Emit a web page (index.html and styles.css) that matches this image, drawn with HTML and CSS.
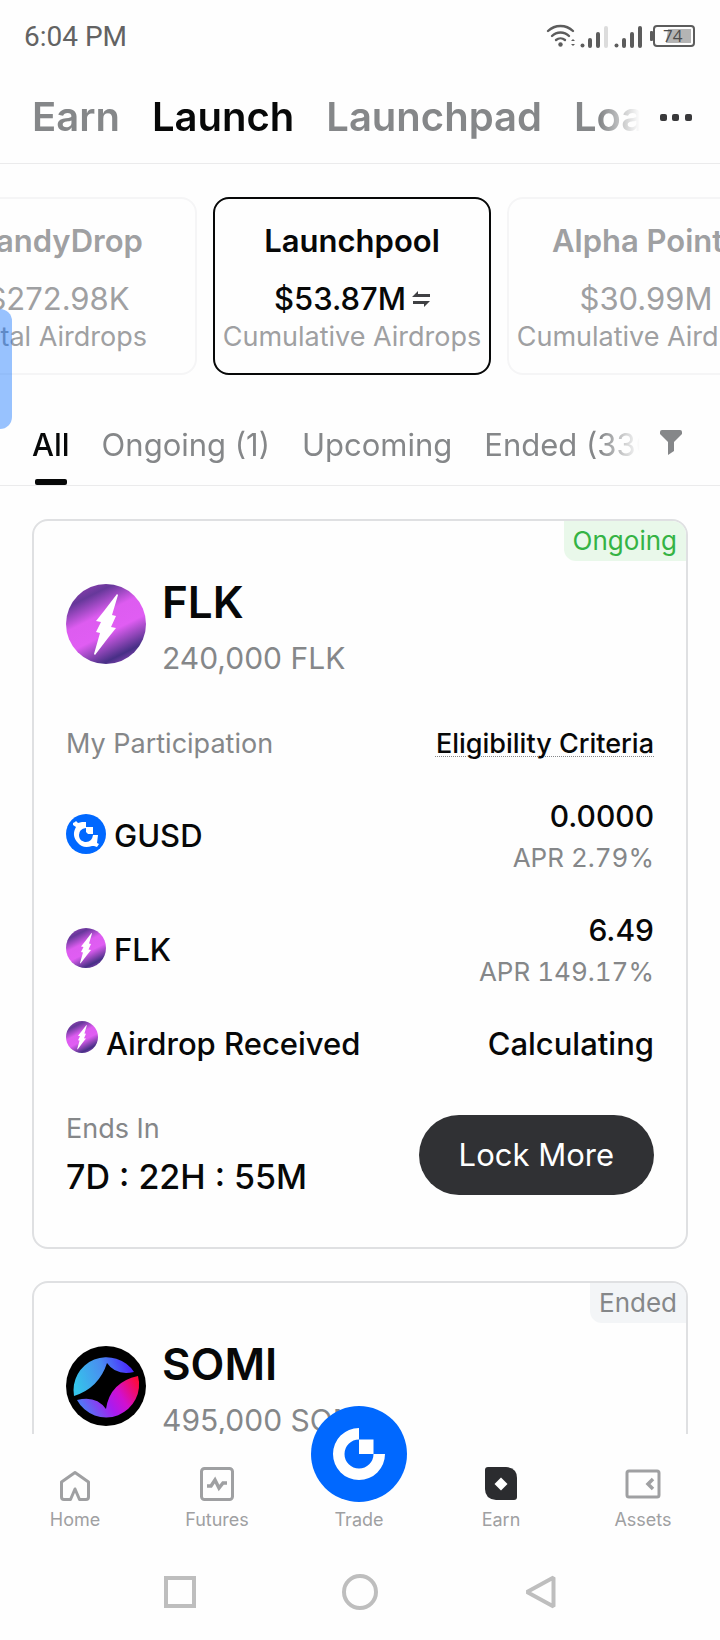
FILE: index.html
```html
<!DOCTYPE html>
<html lang="en">
<head>
  <meta charset="UTF-8">
  <meta name="viewport" content="width=device-width, initial-scale=1.0">
  <title>Launchpool</title>
  <link rel="stylesheet" href="styles.css">
</head>
<body>
  <!-- shared coin icons -->
  <svg class="defs" aria-hidden="true">
    <defs>
      <linearGradient id="flkBg" x1="0.25" y1="0" x2="0.75" y2="1">
        <stop offset="0" stop-color="#8a3fae"/>
        <stop offset="0.14" stop-color="#66389a"/>
        <stop offset="0.38" stop-color="#dd5cf0"/>
        <stop offset="0.6" stop-color="#e05df3"/>
        <stop offset="0.76" stop-color="#8a44b4"/>
        <stop offset="0.88" stop-color="#472f86"/>
        <stop offset="1" stop-color="#8a45b5"/>
      </linearGradient>
      <linearGradient id="somiA" x1="0" y1="0.5" x2="1" y2="0.3">
        <stop offset="0" stop-color="#35c3ea"/>
        <stop offset="0.5" stop-color="#4a8df0"/>
        <stop offset="1" stop-color="#4a1cff"/>
      </linearGradient>
      <linearGradient id="somiB" x1="0" y1="0.6" x2="1" y2="0.2">
        <stop offset="0" stop-color="#4c7df5"/>
        <stop offset="0.42" stop-color="#a81cf0"/>
        <stop offset="0.65" stop-color="#d010d0"/>
        <stop offset="1" stop-color="#ff0a3c"/>
      </linearGradient>
    </defs>
    <symbol id="flk" viewBox="0 0 80 80">
      <circle cx="40" cy="40" r="40" fill="url(#flkBg)"/>
      <path d="M51 10l1 1-6 20 4 1-5 11 5 1-8 10-13 17-1-1 6-21-4-1 5-10-5-1 8-10z" fill="#fff"/>
    </symbol>
  </svg>

  <div class="app">
    <div class="status-bar">
      <span>6:04 PM</span>
      <svg width="150" height="28" viewBox="0 0 150 28" fill="none" stroke="#5c5c5c">
        <g stroke-width="2.4" stroke-linecap="round">
          <path d="M2 8a18 18 0 0 1 25 0M6 13a12 12 0 0 1 17 0M10 17a7 7 0 0 1 9 0"/>
        </g>
        <g fill="#5c5c5c" stroke="none">
          <circle cx="14.500" cy="21.500" r="2.200"/>
          <path d="M25 18l2-2 2 2zM25 21l2 2 2-2z"/>
          <circle cx="36.500" cy="22.500" r="2"/>
          <rect x="42" y="15" width="4" height="10" rx="2"/>
          <rect x="50" y="9" width="4" height="16" rx="2"/>
          <rect x="58" y="3" width="4" height="22" rx="2" fill="#dcdcdc"/>
          <circle cx="70.500" cy="22.500" r="2"/>
          <rect x="76" y="15" width="4" height="10" rx="2"/>
          <rect x="84" y="9" width="4" height="16" rx="2"/>
          <rect x="92" y="3" width="4" height="22" rx="2"/>
          <rect x="104" y="8" width="3" height="10" rx="1"/>
          <path d="M122 6h23v14h-25z" fill="#b4b4b4"/>
        </g>
        <rect x="108" y="3" width="40" height="20" rx="3" stroke-width="2"/>
        <text class="battery" x="117" y="19">74</text>
      </svg>
    </div>

    <header class="top-tabs">
      <nav class="tab-list">
        <a href="#">Earn</a>
        <a href="#" class="active">Launch</a>
        <a href="#">Launchpad</a>
        <a href="#">Loan</a>
      </nav>
      <button class="icon-btn" aria-label="More">
        <svg width="32" height="8" viewBox="0 0 32 8" fill="#39393b">
          <rect x="0" y="0" width="7" height="7" rx="2"/>
          <rect x="12" y="0" width="7" height="7" rx="2"/>
          <rect x="25" y="0" width="7" height="7" rx="2"/>
        </svg>
      </button>
    </header>

    <main>
      <section class="pools">
        <div class="pool">
          <h3>CandyDrop</h3>
          <p class="amount">$272.98K</p>
          <p class="caption">Total Airdrops</p>
        </div>
        <div class="pool active">
          <h3>Launchpool</h3>
          <p class="amount">$53.87M
            <svg width="18" height="16" viewBox="0 0 18 16" fill="#3f4043"><path d="M0 6L6 0v3h12v3zM18 10l-6 6v-3H1v-3z"/></svg>
          </p>
          <p class="caption">Cumulative Airdrops</p>
        </div>
        <div class="pool">
          <h3>Alpha Points</h3>
          <p class="amount">$30.99M</p>
          <p class="caption">Cumulative Airdrops</p>
        </div>
      </section>

      <div class="filter-tabs">
        <nav class="tab-list">
          <a href="#" class="active">All</a>
          <a href="#">Ongoing (1)</a>
          <a href="#">Upcoming</a>
          <a href="#">Ended (330)</a>
        </nav>
        <button class="icon-btn" aria-label="Filter">
          <svg width="22" height="25" viewBox="0 0 22 25" fill="#858789"><path d="M2 0h18q2 0 2 2v2l-8 8v9l-6 4V12L0 4V2q0-2 2-2z"/></svg>
        </button>
      </div>

      <section class="projects">
        <article class="card">
          <span class="badge ongoing">Ongoing</span>
          <div class="card-head">
            <svg width="80" height="80"><use href="#flk"/></svg>
            <div>
              <h2>FLK</h2>
              <p>240,000 FLK</p>
            </div>
          </div>
          <div class="line participation">
            <span>My Participation</span>
            <a href="#">Eligibility Criteria</a>
          </div>
          <div class="line asset">
            <div class="coin">
              <svg width="40" height="40" viewBox="0 0 40 40">
                <circle cx="20" cy="20" r="20" fill="#0068ff"/>
                <g fill="#fff">
                  <path d="M7 9l2-1 1-1 2 2 4-1 4 0v6q-7 1-7 7c0 5 4 7 7 7q6 0 7-7h5l-1 8 2 1-2 3-3-1-2 0q-9 3-14-3c-5-5-5-11-2-16l-3-2z"/>
                  <path d="M20 13h7v7h-5l-2-2z"/>
                </g>
              </svg>
              <span>GUSD</span>
            </div>
            <div class="value">
              <strong>0.0000</strong>
              <small>APR 2.79%</small>
            </div>
          </div>
          <div class="line asset">
            <div class="coin">
              <svg width="40" height="40"><use href="#flk"/></svg>
              <span>FLK</span>
            </div>
            <div class="value">
              <strong>6.49</strong>
              <small>APR 149.17%</small>
            </div>
          </div>
          <div class="line airdrop">
            <div class="coin">
              <svg width="32" height="32"><use href="#flk"/></svg>
              <span>Airdrop Received</span>
            </div>
            <span>Calculating</span>
          </div>
          <div class="line card-foot">
            <div>
              <p class="ends">Ends In</p>
              <p class="timer">7D : 22H : 55M</p>
            </div>
            <button class="lock-btn">Lock More</button>
          </div>
        </article>

        <article class="card">
          <span class="badge">Ended</span>
          <div class="card-head">
            <svg width="80" height="80" viewBox="0 0 80 80">
              <circle cx="40" cy="40" r="40"/>
              <path d="M8 50A33 33 0 0 1 68 26Q50 30 41 17Q33 42 8 50z" fill="url(#somiA)"/>
              <path d="M72 30A33 33 0 0 1 11 54Q30 49 40 63Q44 36 72 30z" fill="url(#somiB)"/>
            </svg>
            <div>
              <h2>SOMI</h2>
              <p>495,000 SOMI</p>
            </div>
          </div>
        </article>
      </section>
    </main>

    <div class="side-handle"></div>

    <footer>
      <nav class="bottom-nav">
        <a href="#">
          <svg width="36" height="36" viewBox="0 0 36 36" fill="none" stroke="#9fa0a2" stroke-width="3" stroke-linejoin="round"><path d="M18 6.500L4.500 16v15q0 2.500 2.500 2.500h6.500L18 23l4.500 10.500H29q2.500 0 2.500-2.500V16z"/></svg>
          Home
        </a>
        <a href="#">
          <svg width="36" height="36" viewBox="0 0 36 36" fill="none" stroke="#9fa0a2" stroke-width="3"><rect x="2.500" y="2.500" width="31" height="31" rx="3"/><path d="M8 20h4l4-6 4 8 4-5h4" stroke-width="3.500"/></svg>
          Futures
        </a>
        <a href="#">
          <svg width="96" height="96" viewBox="0 0 96 96">
            <circle cx="48" cy="48" r="48" fill="#0068ff"/>
            <path d="M48 22A26 26 0 1 0 74 48H62.500A14.500 14.500 0 1 1 48 33.500zM48 33.500h14.500V48H48z" fill="#fff"/>
          </svg>
          Trade
        </a>
        <a href="#">
          <svg width="36" height="36" viewBox="0 0 36 36"><path d="M5 1h18q11 1 11 11v19q0 3-3 3H13Q2 33 2 23V4q0-3 3-3z" fill="#2b2c2f"/><path d="M18 11.500l6.500 6.500-6.500 6.500-6.500-6.500z" fill="#fff"/></svg>
          Earn
        </a>
        <a href="#">
          <svg width="36" height="36" viewBox="0 0 36 36" fill="none" stroke="#9fa0a2" stroke-width="3"><rect x="2" y="5" width="32" height="26" rx="2"/><path d="M28 13l-5 5 5 5" stroke-width="3.500"/></svg>
          Assets
        </a>
      </nav>
      <div class="system-nav">
        <button aria-label="Recent apps"><svg width="36" height="36" viewBox="0 0 36 36"><rect x="4" y="4" width="28" height="28"/></svg></button>
        <button aria-label="Home screen"><svg width="36" height="36" viewBox="0 0 36 36"><circle cx="18" cy="18" r="16"/></svg></button>
        <button aria-label="Back"><svg width="36" height="36" viewBox="0 0 36 36"><path d="M31.500 3.500L5 18l26.500 14.500z" stroke-linejoin="bevel"/></svg></button>
      </div>
    </footer>
  </div>
</body>
</html>
```
FILE: styles.css
```css
* {
  box-sizing: border-box;
}
body {
  margin: 0;
  font-family: Inter, Roboto, sans-serif;
  font-size: 31px;
  line-height: 40px;
  color: #070808;
  background: #fefefe;
}
h2, h3, p {
  margin: 0;
}
a {
  color: inherit;
  text-decoration: none;
}
button {
  border: none;
  padding: 0;
  background: none;
  font: inherit;
  cursor: pointer;
}
svg {
  display: block;
  flex-shrink: 0;
}
.defs {
  position: absolute;
  width: 0;
  height: 0;
}
.app {
  position: relative;
  display: flex;
  flex-direction: column;
  height: 100vh;
  overflow: hidden;
}

/* status bar */
.status-bar {
  display: flex;
  justify-content: space-between;
  align-items: center;
  flex-shrink: 0;
  height: 74px;
  padding: 0 24px;
  font-family: Roboto, sans-serif;
  font-size: 28px;
  color: #636363;
}
.battery {
  font: 17px "Open Sans", sans-serif;
  fill: #4c4c4c;
  stroke: none;
}

/* tabs */
.top-tabs,
.filter-tabs {
  display: flex;
  align-items: flex-start;
  justify-content: space-between;
  flex-shrink: 0;
  padding: 0 28px 0 32px;
  border-bottom: 1px solid #ebebec;
}
.tab-list {
  display: flex;
  flex: 1;
  gap: 32px;
  overflow: hidden;
  white-space: nowrap;
  color: #858789;
  mask-image: linear-gradient(to right, #000 calc(100% - 40px), transparent);
}
.tab-list .active {
  color: #070808;
}
.icon-btn {
  display: flex;
  align-items: center;
  width: 32px;
  margin-left: 20px;
}
.top-tabs {
  height: 90px;
  padding-top: 18px;
  font-size: 40px;
  font-weight: 600;
  line-height: 50px;
}
.top-tabs .icon-btn {
  height: 52px;
}
.filter-tabs {
  padding-top: 50px;
}
.filter-tabs a {
  padding-bottom: 20px;
}
.filter-tabs .active {
  position: relative;
  font-weight: 500;
}
.filter-tabs .active::after {
  content: "";
  position: absolute;
  left: 50%;
  bottom: 0;
  width: 32px;
  height: 6px;
  margin-left: -16px;
  border-radius: 2px;
  background: #070808;
}
.filter-tabs .icon-btn {
  height: 34px;
}

main {
  flex: 1;
  min-height: 0;
  overflow: hidden;
}

/* pool switcher */
.pools {
  display: flex;
  justify-content: center;
  gap: 16px;
  padding: 33px 16px 0 0;
  overflow: hidden;
}
.pool {
  flex: 0 0 278px;
  height: 178px;
  padding-top: 22px;
  border: 2px solid #f5f5f6;
  border-radius: 16px;
  text-align: center;
  white-space: nowrap;
  color: #9fa0a2;
}
.pool.active {
  border-color: #070808;
  color: #070808;
}
.pool h3 {
  margin-bottom: 18px;
  font-size: 31px;
  font-weight: 600;
}
.amount {
  display: flex;
  align-items: center;
  justify-content: center;
  gap: 6px;
}
.active .amount {
  font-weight: 500;
}
.caption {
  font-size: 27px;
  line-height: 36px;
  color: #9fa0a2;
}

/* project cards */
.projects {
  display: flex;
  flex-direction: column;
  gap: 32px;
  padding: 33px 32px;
}
.card {
  position: relative;
  padding: 51px 32px 48px;
  border: 2px solid #dfe0e2;
  border-radius: 16px;
}
.badge {
  position: absolute;
  top: 0;
  right: 0;
  padding: 0 9px;
  border-radius: 0 14px 0 12px;
  font-size: 26px;
  background: #f3f5f7;
  color: #858789;
}
.badge.ongoing {
  background: #e9f8ea;
  color: #35b344;
}
.card-head {
  display: flex;
  align-items: center;
  gap: 16px;
}
.card-head h2 {
  font-size: 44px;
  font-weight: 600;
  line-height: 60px;
}
.card-head p {
  margin-top: 8px;
  font-size: 30px;
  line-height: 36px;
  color: #858789;
}
.line {
  display: flex;
  align-items: center;
  justify-content: space-between;
}
.participation {
  margin: 50px 0 34px;
  font-size: 27px;
  line-height: 36px;
  color: #858789;
}
.participation a {
  font-weight: 500;
  color: #070808;
  text-decoration: underline dotted #858789 1px;
  text-underline-offset: 3px;
}
.asset {
  align-items: flex-start;
  margin-top: 30px;
}
.coin {
  display: flex;
  align-items: flex-start;
  gap: 8px;
  font-weight: 500;
}
.asset .coin {
  padding-top: 18px;
  line-height: 44px;
}
.value {
  text-align: right;
}
.value strong,
.value small {
  display: block;
  font-size: 30px;
  font-weight: 500;
}
.value small {
  font-size: 26px;
  font-weight: 400;
  line-height: 44px;
  font-variant-numeric: tabular-nums;
  color: #858789;
}
.airdrop {
  margin-top: 27px;
  font-weight: 500;
  line-height: 46px;
}
.card-foot {
  margin-top: 44px;
}
.ends {
  font-size: 27px;
  line-height: 36px;
  color: #858789;
}
.timer {
  margin-top: 8px;
  font-size: 34px;
  font-weight: 500;
  line-height: 44px;
}
.lock-btn {
  height: 80px;
  padding: 0 40px;
  border-radius: 40px;
  background: #303134;
  color: #fff;
}

.side-handle {
  position: absolute;
  left: 0;
  top: 309px;
  width: 12px;
  height: 120px;
  border-radius: 0 12px 12px 0;
  background: rgba(0, 104, 255, 0.4);
}

/* bottom bars */
footer {
  position: relative;
  flex-shrink: 0;
  background: #fefefe;
}
.bottom-nav {
  display: grid;
  grid-template-columns: repeat(5, 1fr);
  grid-template-rows: 98px;
  padding: 0 6px 0 4px;
}
.bottom-nav a {
  display: flex;
  flex-direction: column;
  align-items: center;
  justify-content: flex-end;
  gap: 6px;
  font-size: 18px;
  line-height: 24px;
  color: #9fa0a2;
}
.system-nav {
  display: grid;
  grid-template-columns: repeat(3, 1fr);
  height: 108px;
  padding: 42px 90px 0;
}
.system-nav button {
  display: flex;
  justify-content: center;
}
.system-nav svg {
  fill: none;
  stroke: #bebebe;
  stroke-width: 4;
}
```
